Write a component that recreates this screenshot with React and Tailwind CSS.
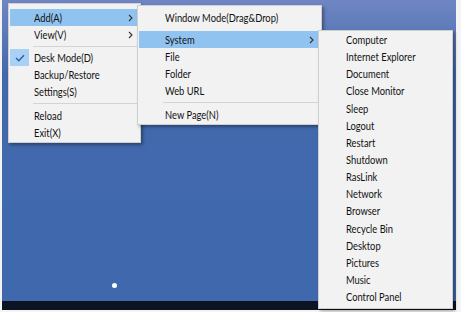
import React from "react";

const font = { fontFamily: 'Lato, "Noto Sans", sans-serif' };

function Chevron() {
  return (
    <svg width="5" height="8" viewBox="0 0 5 8" className="absolute right-[6px] top-[5px]">
      <path d="M1 1 L4 4 L1 7" fill="none" stroke="#333" strokeWidth="1.1" />
    </svg>
  );
}

function Row({ label, hl, arrow, check, pl, h = "h-[17px]" }) {
  return (
    <div
      className={`relative ${h} flex items-center text-[11px] leading-none text-[#111] ${hl ? "bg-[#91c3f0]" : ""} ${pl}`}
    >
      {check && (
        <div className="absolute left-0 top-0 h-[17px] w-[19px] bg-[#a9d1f5] flex items-center justify-center">
          <svg width="10" height="8" viewBox="0 0 10 8">
            <path d="M1 4 L3.8 6.8 L9 1.2" fill="none" stroke="#2a5ea8" strokeWidth="1.4" />
          </svg>
        </div>
      )}
      <span className="inline-block origin-left scale-x-[0.85] whitespace-nowrap">{label}</span>
      {arrow && <Chevron />}
    </div>
  );
}

function Sep({ h = "h-[7px]", indent }) {
  return (
    <div className={`${h} flex items-center ${indent}`}>
      <div className="h-px w-full bg-[#d4d4d4]" />
    </div>
  );
}

export default function App() {
  return (
    <div className="relative w-[461px] h-[312px] bg-[#f4f4f4] overflow-hidden" style={font}>
      {/* desktop */}
      <div className="absolute left-[2px] top-0 w-[454px] h-[310px] flex flex-col">
        <div className="flex-1 bg-gradient-to-b from-[#6f86c3] via-[#4369ac] via-25% to-[#3f68ad] relative">
          <div className="absolute left-[110px] top-[283px] w-[5px] h-[5px] rounded-full bg-white" />
        </div>
        <div className="h-[9px] bg-[#0c1424]" />
      </div>

      {/* main menu */}
      <div className="absolute left-[8px] top-[3px] w-[133px] h-[140px] bg-[#f2f2f2] border border-[#cfcfcf] shadow-[2px_2px_3px_rgba(0,0,0,0.35)] px-[1px] pt-[5px]">
        <Row label="Add(A)" hl arrow pl="pl-[24px]" />
        <Row label="View(V)" arrow pl="pl-[24px]" />
        <Sep h="h-[6px]" indent="pl-[23px] pr-[2px]" />
        <Row label="Desk Mode(D)" check pl="pl-[24px]" />
        <Row label="Backup/Restore" pl="pl-[24px]" />
        <Row label="Settings(S)" pl="pl-[24px]" />
        <Sep indent="pl-[23px] pr-[2px]" />
        <Row label="Reload" pl="pl-[24px]" />
        <Row label="Exit(X)" pl="pl-[24px]" />
      </div>

      {/* add submenu */}
      <div className="absolute left-[137px] top-[5px] w-[185px] h-[120px] bg-[#f2f2f2] border border-[#cfcfcf] shadow-[2px_2px_3px_rgba(0,0,0,0.35)] px-[1px] pt-[3px]">
        <Row label="Window Mode(Drag&Drop)" pl="pl-[26px]" />
        <div className="h-[5px]" />
        <Row label="System" hl arrow pl="pl-[26px]" />
        <Row label="File" pl="pl-[26px]" />
        <Row label="Folder" pl="pl-[26px]" />
        <Row label="Web URL" pl="pl-[26px]" />
        <Sep indent="pl-[24px] pr-[2px]" />
        <Row label="New Page(N)" pl="pl-[26px]" />
      </div>

      {/* system submenu */}
      <div className="absolute left-[318px] top-[30px] w-[135px] h-[279px] bg-[#f2f2f2] border border-[#cfcfcf] shadow-[2px_2px_3px_rgba(0,0,0,0.35)] px-[1px] pt-[0px]">
        {[
          "Computer",
          "Internet Explorer",
          "Document",
          "Close Monitor",
          "Sleep",
          "Logout",
          "Restart",
          "Shutdown",
          "RasLink",
          "Network",
          "Browser",
          "Recycle Bin",
          "Desktop",
          "Pictures",
          "Music",
          "Control Panel",
        ].map((l) => (
          <Row key={l} label={l} pl="pl-[26px]" h="h-[17.15px]" />
        ))}
      </div>
    </div>
  );
}
